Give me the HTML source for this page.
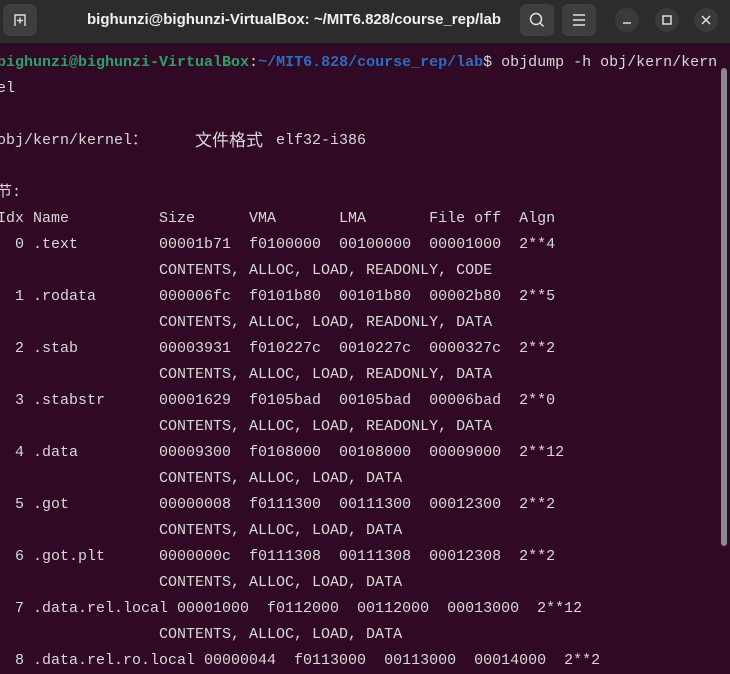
<!DOCTYPE html>
<html><head><meta charset="utf-8"><style>
html,body{margin:0;padding:0;width:730px;height:673px;overflow:hidden;background:#300a24;}
.tb{position:absolute;left:0;top:0;width:730px;height:43px;background:#2c2c2c;}
.title{position:absolute;left:0;width:588px;top:0;height:43px;text-align:center;color:#f0f0f0;font:bold 15px "Liberation Sans","DejaVu Sans",sans-serif;line-height:40px;}
.btn{position:absolute;top:4px;width:34px;height:32px;background:#3e3e3e;border-radius:6px;}
.cb{position:absolute;top:8px;width:24px;height:24px;border-radius:12px;background:#3a3a3a;}
.term{position:absolute;left:-3px;top:50px;margin:0;color:#d8d8d8;font:15px "Liberation Mono","Noto Sans CJK SC",monospace;line-height:26px;white-space:pre;}
.g{color:#26a269;font-weight:bold}.b{color:#2a6cc7;font-weight:bold}
.sb{position:absolute;left:721px;top:68px;width:6px;height:478px;background:#8a8a8a;border-radius:3px;}
</style></head><body>
<div class="tb">
<div class="btn" style="left:3px"><svg width="34" height="32" viewBox="0 0 34 32"><path d="M12 22V11h10v11M14 16.5h6M17 13.5v6" stroke="#e0e0e0" stroke-width="1.4" fill="none"/></svg></div>
<div class="title">bighunzi@bighunzi-VirtualBox: ~/MIT6.828/course_rep/lab</div>
<div class="btn" style="left:520px"><svg width="34" height="32" viewBox="0 0 34 32"><circle cx="16" cy="15" r="5.5" stroke="#e0e0e0" stroke-width="1.5" fill="none"/><path d="M20 19l3.5 3.5" stroke="#e0e0e0" stroke-width="1.5"/></svg></div>
<div class="btn" style="left:562px"><svg width="34" height="32" viewBox="0 0 34 32"><path d="M11 11h12M11 16h12M11 21h12" stroke="#e0e0e0" stroke-width="1.4"/></svg></div>
<div class="cb" style="left:615px"><svg width="24" height="24"><path d="M8 15h8" stroke="#e8e8e8" stroke-width="1.4"/></svg></div>
<div class="cb" style="left:655px"><svg width="24" height="24"><rect x="8" y="8" width="8" height="8" stroke="#e8e8e8" stroke-width="1.4" fill="none"/></svg></div>
<div class="cb" style="left:694px"><svg width="24" height="24"><path d="M8 8l8 8M16 8l-8 8" stroke="#e8e8e8" stroke-width="1.4"/></svg></div>
</div>
<pre class="term"><span class="g">bighunzi@bighunzi-VirtualBox</span>:<span class="b">~/MIT6.828/course_rep/lab</span>$ objdump -h obj/kern/kern
el

obj/kern/kernel：

节:
Idx Name          Size      VMA       LMA       File off  Algn
  0 .text         00001b71  f0100000  00100000  00001000  2**4
                  CONTENTS, ALLOC, LOAD, READONLY, CODE
  1 .rodata       000006fc  f0101b80  00101b80  00002b80  2**5
                  CONTENTS, ALLOC, LOAD, READONLY, DATA
  2 .stab         00003931  f010227c  0010227c  0000327c  2**2
                  CONTENTS, ALLOC, LOAD, READONLY, DATA
  3 .stabstr      00001629  f0105bad  00105bad  00006bad  2**0
                  CONTENTS, ALLOC, LOAD, READONLY, DATA
  4 .data         00009300  f0108000  00108000  00009000  2**12
                  CONTENTS, ALLOC, LOAD, DATA
  5 .got          00000008  f0111300  00111300  00012300  2**2
                  CONTENTS, ALLOC, LOAD, DATA
  6 .got.plt      0000000c  f0111308  00111308  00012308  2**2
                  CONTENTS, ALLOC, LOAD, DATA
  7 .data.rel.local 00001000  f0112000  00112000  00013000  2**12
                  CONTENTS, ALLOC, LOAD, DATA
  8 .data.rel.ro.local 00000044  f0113000  00113000  00014000  2**2
</pre>
<div style="position:absolute;left:195px;top:126px;color:#d8d8d8;font:17px 'Noto Sans CJK SC',sans-serif;line-height:26px;">文件格式</div>
<div style="position:absolute;left:276px;top:128px;color:#d8d8d8;font:15px 'Liberation Mono',monospace;line-height:26px;">elf32-i386</div>
<div class="sb"></div>
</body></html>
